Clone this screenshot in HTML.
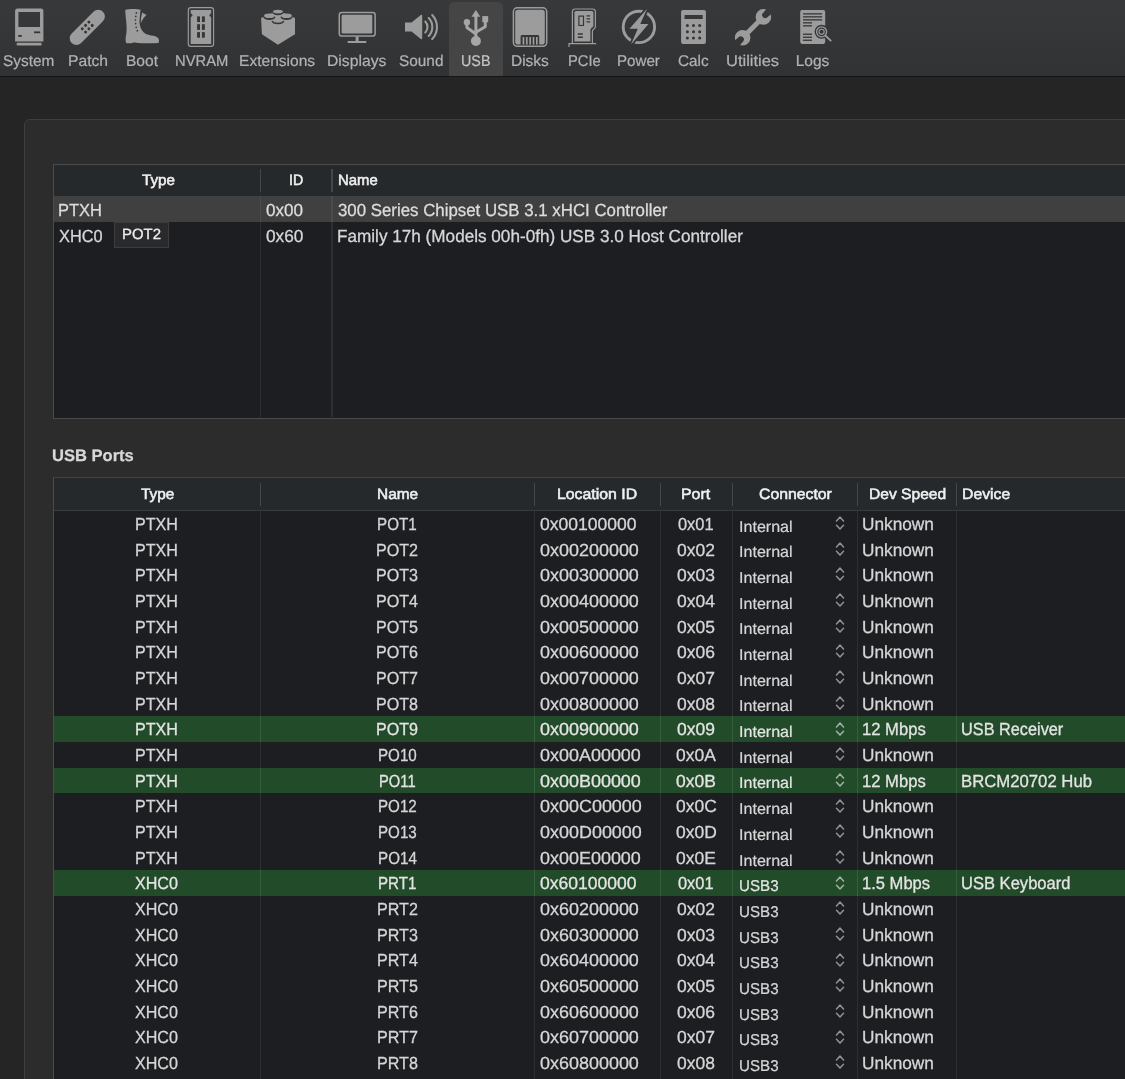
<!DOCTYPE html>
<html><head><meta charset="utf-8"><title>Hackintool - USB</title><style>
*{margin:0;padding:0;box-sizing:border-box}
html,body{width:1125px;height:1079px;overflow:hidden;background:#252525}
body{position:relative;text-rendering:geometricPrecision;font-family:"Liberation Sans",sans-serif;color:#d9d9d9;font-size:16px}
#root{position:absolute;left:0;top:0;width:1125px;height:1079px;overflow:hidden;will-change:opacity}
.abs{position:absolute}
#tb{position:absolute;left:0;top:0;width:1125px;height:76px;background:linear-gradient(#38393a,#313234)}
#tbline{position:absolute;left:0;top:76px;width:1125px;height:1.4px;background:#151515}
#sel{position:absolute;left:449px;top:1.5px;width:54px;height:74.5px;background:#454546;border-radius:5px 5px 0 0}
.lbl{position:absolute;top:51.6px;height:20px;line-height:20px;font-size:15.2px;letter-spacing:0.1px;color:#b2b2b2;text-align:center;white-space:nowrap;transform:translateX(-50%)}
.ico{position:absolute;left:0;top:0}
#box{position:absolute;left:24px;top:119px;width:1200px;height:1100px;background:#2c2c2c;border:1.2px solid #3e3e3e;border-radius:6px}
.tbl{position:absolute;left:53px;width:1100px;background:#1d1e22;border:1.2px solid #4a4b4d;border-right:none}
.hdr{position:absolute;left:0;width:1100px;background:#26292c}
.hl{position:absolute;width:1.2px;background:#45474a}
.vl{position:absolute;width:1.2px;background:#2e2f33}
.ht{position:absolute;font-size:14.6px;color:#f2f2f2;white-space:nowrap;-webkit-text-stroke:0.35px #f2f2f2;letter-spacing:0.35px}
.c{position:absolute;white-space:nowrap;color:#d6d6d6;font-size:16px}
.cc{transform:translateX(-50%)}
.t{position:absolute;white-space:nowrap;line-height:24px;will-change:opacity;transform-origin:0 0}
.g{position:absolute;left:54px;width:1100px;background:#224c29}
</style></head><body><div id="root">
<div id="tb"></div><div id="sel"></div><div id="tbline"></div>
<svg class="ico" width="1125" height="76" viewBox="0 0 1125 76"><g fill="#9c9c9c"><path fill-rule="evenodd" d="M17.6 8.6h23.3a2.5 2.5 0 0 1 2.5 2.5v30.4h-28.3v-30.4a2.5 2.5 0 0 1 2.5-2.5zM18.4 11.9v15h21.6v-15z"/><rect x="16.6" y="42.8" width="25" height="2.8" rx="1"/></g><rect x="34" y="31.4" width="6.2" height="1.8" fill="#353638"/><rect x="18.2" y="35" width="3.5" height="1.8" fill="#353638"/><g transform="translate(87.3 27.3) rotate(-45)"><rect x="-22.1" y="-6.7" width="44.2" height="13.4" rx="6.7" fill="#9c9c9c"/><circle cx="-4.55" cy="-2.6" r="1.45" fill="#353638"/><circle cx="-4.55" cy="2.1" r="1.45" fill="#353638"/><circle cx="0.15" cy="-2.6" r="1.45" fill="#353638"/><circle cx="0.15" cy="2.1" r="1.45" fill="#353638"/><circle cx="4.85" cy="-2.6" r="1.45" fill="#353638"/><circle cx="4.85" cy="2.1" r="1.45" fill="#353638"/></g><path fill="#9c9c9c" d="M125.2 10C128 8.7 137 8.600 140.600 9.600C140.200 13 139.700 18 139.600 21.500C139.600 26 141 29.800 143.800 32.400C146.500 34.800 150 35.200 153.500 35.800C157 36.400 159 38 159 40.500C159 41.600 158.800 42.400 158.400 43C150 43.600 141 43.300 136 42.800C134.500 42.400 133.500 42.400 132.500 43C130 43.400 128 43.300 126.200 43C125.300 40.500 125.500 38 126 35.500C127 31 126.600 26 126.200 21.800C125.800 17 125.300 13 125.200 10Z"/><path fill="#9c9c9c" d="M142.100 12.500L146.500 15C144 17 142.100 20 140.700 23.800C140.500 20 141 16 142.100 12.500Z"/><path d="M141.300 11.500C140.800 15.500 140.300 19.500 140.100 23.600" fill="none" stroke="#353638" stroke-width="0.700"/><circle cx="136.4" cy="12.9" r="0.85" fill="#353638"/><circle cx="135.8" cy="16.4" r="0.85" fill="#353638"/><circle cx="135.4" cy="20" r="0.85" fill="#353638"/><circle cx="135.6" cy="23.6" r="0.85" fill="#353638"/><circle cx="136.2" cy="27.3" r="0.85" fill="#353638"/><circle cx="137.3" cy="30.7" r="0.85" fill="#353638"/><rect x="188.3" y="7.6" width="25.300" height="38.700" rx="2.600" fill="none" stroke="#9c9c9c" stroke-width="1.150"/><path fill="#9c9c9c" d="M190.700 10h20.500v3l-2 2.300 2 2.300v26.500h-20.500v-26.500l2-2.300-2-2.300z"/><rect x="197.1" y="16.4" width="2.900" height="5.7" fill="#353638"/><rect x="197.1" y="24.2" width="2.900" height="5.7" fill="#353638"/><rect x="197.1" y="32.1" width="2.900" height="5.6" fill="#353638"/><rect x="201.95" y="16.4" width="2.900" height="5.7" fill="#353638"/><rect x="201.95" y="24.2" width="2.900" height="5.7" fill="#353638"/><rect x="201.95" y="32.1" width="2.900" height="5.6" fill="#353638"/><path fill="#9c9c9c" d="M261.100 18L277.900 10.500l17.100 7.500v16.200l-17.100 10.600-16-10.600z"/><ellipse cx="277.900" cy="12.600" rx="5" ry="2" fill="#9c9c9c"/><ellipse cx="277.9" cy="12.9" rx="5.4" ry="2.4" fill="#353638"/><ellipse cx="277.9" cy="11.6" rx="4.9" ry="1.9" fill="#9c9c9c"/><rect x="264.050" y="15.800" width="10.700" height="1.300" fill="#9c9c9c"/><rect x="281.150" y="15.800" width="10.700" height="1.300" fill="#9c9c9c"/><ellipse cx="269.4" cy="17.2" rx="5.8" ry="2.8" fill="#353638"/><ellipse cx="269.4" cy="15.8" rx="5.3" ry="2.3" fill="#9c9c9c"/><ellipse cx="286.5" cy="17.2" rx="5.8" ry="2.8" fill="#353638"/><ellipse cx="286.5" cy="15.8" rx="5.3" ry="2.3" fill="#9c9c9c"/><path d="M272.100 21.100a5.900 3 0 0 0 11.600 0" fill="none" stroke="#353638" stroke-width="1.400"/><rect x="339.250" y="12.450" width="35.900" height="23.600" rx="2.600" fill="none" stroke="#9c9c9c" stroke-width="1.500"/><rect x="341.600" y="14.800" width="30.700" height="18.700" rx="1.300" fill="#9c9c9c"/><rect x="355.600" y="36.500" width="3" height="4.800" fill="#9c9c9c"/><rect x="347.600" y="40.900" width="18.700" height="2.100" rx="0.500" fill="#9c9c9c"/><path fill="#9c9c9c" d="M405 22.500h6.500l9.300-7.600c.7-.5 1.400-.2 1.400.6v23c0 .8-.7 1.100-1.400.6l-9.300-7.600h-6.500z"/><g fill="none" stroke="#9c9c9c" stroke-width="2.100" stroke-linecap="round"><path d="M425.300 21.500a8 8 0 0 1 0 11"/><path d="M428.700 18a13 13 0 0 1 0 18"/><path d="M432.200 15a17.500 17.500 0 0 1 0 24"/></g><g fill="#a6a6a6" stroke="none"><circle cx="475.900" cy="41" r="5"/><path d="M475.900 10l4.400 6.700h-8.800z"/><circle cx="466.900" cy="22.300" r="3.200"/><rect x="482.300" y="16.100" width="5.900" height="6.100"/></g><g fill="none" stroke="#a6a6a6" stroke-width="3" stroke-linejoin="round"><path d="M475.900 16v22"/><path d="M466.900 23v4.600l9 6.300"/><path d="M485.250 21v5.800l-9.350 5.400"/></g><rect x="513.400" y="7.800" width="33.300" height="38.500" rx="3.800" fill="none" stroke="#9c9c9c" stroke-width="1.500"/><path fill="#9c9c9c" fill-rule="evenodd" d="M518 9.700h24a2.800 2.800 0 0 1 2.800 2.800v29.300a2.800 2.800 0 0 1-2.800 2.800h-2.800v-8a1.500 1.500 0 0 0-1.500-1.500h-15.600a1.500 1.500 0 0 0-1.500 1.500v8h-2.600a2.800 2.800 0 0 1-2.800-2.800v-29.300a2.800 2.800 0 0 1 2.800-2.800z"/><rect x="522.60" y="37" width="1.700" height="7.600" fill="#9c9c9c"/><rect x="525.95" y="37" width="1.700" height="7.600" fill="#9c9c9c"/><rect x="529.30" y="37" width="1.700" height="7.600" fill="#9c9c9c"/><rect x="532.65" y="37" width="1.700" height="7.600" fill="#9c9c9c"/><rect x="536.00" y="37" width="1.700" height="7.600" fill="#9c9c9c"/><g fill="none" stroke="#9c9c9c" stroke-width="1.2"><path d="M572.400 43.200v-31.500a2.700 2.700 0 0 1 2.700-2.700h17.600a2.700 2.700 0 0 1 2.700 2.700v14.500c0 1.500-.5 2.200-1.500 2.800-1 .6-1.500 1.300-1.500 2.800v11.400"/><path d="M569 47v-3.400h27.200"/></g><path fill="#9c9c9c" fill-rule="evenodd" d="M574.400 41.600v-29a1.600 1.600 0 0 1 1.600-1.600h15.800a1.600 1.600 0 0 1 1.600 1.600v12.600c0 1.300-.5 2-1.500 2.600-1 .6-1.500 1.500-1.500 2.800v11zM578.300 15.500v10.600h5.800v-10.600zM586.500 15.200v1.300h3.600v-1.300zM586.500 18.200v1.300h3.600v-1.300zM586.500 21.200v1.300h3.600v-1.300zM577.800 33.300v1.400h5v-1.400zM577.800 36.600v1.400h5v-1.400z"/><rect x="579.500" y="16.700" width="3.400" height="8.200" fill="#9c9c9c"/><circle cx="638.900" cy="26.900" r="15.700" fill="none" stroke="#9c9c9c" stroke-width="2.900"/><path fill="#9c9c9c" d="M647.100 8.700L629.500 28.700h8.300L631 44.600l17.500-20.700h-8.200z" stroke="#353638" stroke-width="3.600" paint-order="stroke" stroke-linejoin="miter"/><path fill="#9c9c9c" fill-rule="evenodd" d="M683 10.100h21a1.900 1.900 0 0 1 1.900 1.900v30a1.900 1.900 0 0 1-1.900 1.900h-21a1.900 1.900 0 0 1-1.900-1.900v-30a1.900 1.900 0 0 1 1.900-1.900zM684.500 14.900v4.200h18.200v-4.200z"/><circle cx="687.4" cy="25.4" r="1.5" fill="#353638"/><circle cx="687.4" cy="31.7" r="1.5" fill="#353638"/><circle cx="687.4" cy="38" r="1.5" fill="#353638"/><circle cx="693.5" cy="25.4" r="1.5" fill="#353638"/><circle cx="693.5" cy="31.7" r="1.5" fill="#353638"/><circle cx="693.5" cy="38" r="1.5" fill="#353638"/><circle cx="699.7" cy="25.4" r="1.5" fill="#353638"/><circle cx="699.7" cy="31.7" r="1.5" fill="#353638"/><circle cx="699.7" cy="38" r="1.5" fill="#353638"/><mask id="wm" maskUnits="userSpaceOnUse" x="-30" y="-30" width="60" height="60"><rect x="-30" y="-30" width="60" height="60" fill="#fff"/><path fill="#000" d="M-3.700 -25L-3.100 -17.300a3.100 3.100 0 0 0 6.200 0L3.700 -25zM-3.700 25L-3.100 17.300a3.100 3.100 0 0 1 6.200 0L3.700 25z"/></mask><g transform="translate(753 27.300) rotate(45)"><g mask="url(#wm)" fill="#9c9c9c"><circle cx="0" cy="-14.700" r="7.800"/><circle cx="0" cy="14.700" r="7.800"/><rect x="-2.450" y="-14" width="4.900" height="28"/></g></g><path fill="#9c9c9c" d="M802 10.100h21.400a1.800 1.800 0 0 1 1.800 1.800v30.200a1.800 1.800 0 0 1-1.800 1.800h-21.400a1.800 1.800 0 0 1-1.800-1.800v-30.200a1.800 1.800 0 0 1 1.800-1.800z"/><rect x="803" y="13.2" width="19.200" height="1.300" fill="#353638"/><rect x="803" y="16.2" width="19.200" height="1.300" fill="#353638"/><rect x="803" y="19.2" width="19.200" height="1.300" fill="#353638"/><rect x="803" y="22.2" width="9" height="1.300" fill="#353638"/><rect x="803" y="25.2" width="9" height="1.300" fill="#353638"/><rect x="803" y="33.6" width="9" height="1.300" fill="#353638"/><rect x="803" y="36.6" width="9" height="1.300" fill="#353638"/><rect x="803" y="39.6" width="9" height="1.300" fill="#353638"/><circle cx="821.600" cy="31.800" r="7" fill="#353638"/><path d="M824.800 35.500l6.100 5.500" stroke="#353638" stroke-width="4" /><circle cx="821.600" cy="31.800" r="5" fill="none" stroke="#9c9c9c" stroke-width="1.300"/><circle cx="821.600" cy="31.800" r="2.600" fill="none" stroke="#9c9c9c" stroke-width="1.100"/><path d="M825.300 35.500l5.400 5.100" stroke="#9c9c9c" stroke-width="1.800" stroke-linecap="round"/></svg>
<div class="t" style="left:3.23px;top:50px;font-size:15.5px;color:#b2b2b2;-webkit-text-stroke:0.22px #b2b2b2;transform:scaleX(0.9931);">System</div>
<div class="t" style="left:67.99px;top:50px;font-size:15.5px;color:#b2b2b2;-webkit-text-stroke:0.22px #b2b2b2;transform:scaleX(1.0106);">Patch</div>
<div class="t" style="left:125.85px;top:50px;font-size:15.5px;color:#b2b2b2;-webkit-text-stroke:0.22px #b2b2b2;transform:scaleX(1.0032);">Boot</div>
<div class="t" style="left:174.60px;top:50px;font-size:15.5px;color:#b2b2b2;-webkit-text-stroke:0.22px #b2b2b2;transform:scaleX(0.9524);">NVRAM</div>
<div class="t" style="left:239.25px;top:50px;font-size:15.5px;color:#b2b2b2;-webkit-text-stroke:0.22px #b2b2b2;transform:scaleX(1.0040);">Extensions</div>
<div class="t" style="left:326.84px;top:50px;font-size:15.5px;color:#b2b2b2;-webkit-text-stroke:0.22px #b2b2b2;transform:scaleX(1.0140);">Displays</div>
<div class="t" style="left:398.63px;top:50px;font-size:15.5px;color:#b2b2b2;-webkit-text-stroke:0.22px #b2b2b2;transform:scaleX(0.9914);">Sound</div>
<div class="t" style="left:460.93px;top:50px;font-size:15.5px;color:#c4c4c4;-webkit-text-stroke:0.22px #c4c4c4;transform:scaleX(0.9233);">USB</div>
<div class="t" style="left:511.05px;top:50px;font-size:15.5px;color:#b2b2b2;-webkit-text-stroke:0.22px #b2b2b2;transform:scaleX(0.9989);">Disks</div>
<div class="t" style="left:567.70px;top:50px;font-size:15.5px;color:#b2b2b2;-webkit-text-stroke:0.22px #b2b2b2;transform:scaleX(0.9499);">PCIe</div>
<div class="t" style="left:616.98px;top:50px;font-size:15.5px;color:#b2b2b2;-webkit-text-stroke:0.22px #b2b2b2;transform:scaleX(0.9744);">Power</div>
<div class="t" style="left:678.01px;top:50px;font-size:15.5px;color:#b2b2b2;-webkit-text-stroke:0.22px #b2b2b2;transform:scaleX(0.9859);">Calc</div>
<div class="t" style="left:725.89px;top:50px;font-size:15.5px;color:#b2b2b2;-webkit-text-stroke:0.22px #b2b2b2;transform:scaleX(1.0628);">Utilities</div>
<div class="t" style="left:795.75px;top:50px;font-size:15.5px;color:#b2b2b2;-webkit-text-stroke:0.22px #b2b2b2;transform:scaleX(1.0000);">Logs</div>
<div id="box"></div>
<div class="tbl" style="top:164px;height:254.600px"></div>
<div class="hdr" style="left:54.200px;top:165.200px;height:31.200px"></div>
<div class="abs" style="left:54.200px;top:196.200px;width:1100px;height:25.700px;background:#404040"></div>
<div class="vl" style="left:260px;top:196.300px;height:221px"></div>
<div class="vl" style="left:260px;top:196.200px;height:25.700px;background:#4c4c4c"></div>
<div class="hl" style="left:260px;top:169px;height:22.700px"></div>
<div class="vl" style="left:331.4px;top:196.300px;height:221px"></div>
<div class="vl" style="left:331.4px;top:196.200px;height:25.700px;background:#4c4c4c"></div>
<div class="hl" style="left:331.4px;top:169px;height:22.700px"></div>
<div class="t" style="left:141.55px;top:169px;font-size:15.0px;color:#f0f0f0;-webkit-text-stroke:0.55px #f0f0f0;transform:scaleX(1.0156);">Type</div>
<div class="t" style="left:289.00px;top:169px;font-size:15.0px;color:#f0f0f0;-webkit-text-stroke:0.55px #f0f0f0;transform:scaleX(0.9468);">ID</div>
<div class="t" style="left:338.16px;top:169px;font-size:15.0px;color:#f0f0f0;-webkit-text-stroke:0.55px #f0f0f0;transform:scaleX(0.9911);">Name</div>
<div class="t" style="left:58.20px;top:198px;font-size:17.5px;color:#dcdcdc;-webkit-text-stroke:0.3px #dcdcdc;transform:scaleX(0.9422);">PTXH</div>
<div class="t" style="left:265.98px;top:198px;font-size:17.5px;color:#dcdcdc;-webkit-text-stroke:0.3px #dcdcdc;transform:scaleX(0.9754);">0x00</div>
<div class="t" style="left:337.59px;top:198px;font-size:17.5px;color:#dcdcdc;-webkit-text-stroke:0.3px #dcdcdc;transform:scaleX(0.9621);">300 Series Chipset USB 3.1 xHCI Controller</div>
<div class="t" style="left:58.86px;top:224px;font-size:17.5px;color:#d6d6d6;-webkit-text-stroke:0.3px #d6d6d6;transform:scaleX(0.9340);">XHC0</div>
<div class="t" style="left:265.97px;top:224px;font-size:17.5px;color:#d6d6d6;-webkit-text-stroke:0.3px #d6d6d6;transform:scaleX(0.9861);">0x60</div>
<div class="t" style="left:336.97px;top:224px;font-size:17.5px;color:#d6d6d6;-webkit-text-stroke:0.3px #d6d6d6;transform:scaleX(0.9796);">Family 17h (Models 00h-0fh) USB 3.0 Host Controller</div>
<div class="abs" style="left:113.600px;top:221.600px;width:55.800px;height:26.200px;background:#2a2a2c;border:1.2px solid #3d3d40"></div>
<div class="t" style="left:121.74px;top:223px;font-size:14.8px;color:#ececec;-webkit-text-stroke:0.3px #ececec;transform:scaleX(1.0074);">POT2</div>
<div class="t" style="left:52.07px;top:444px;font-size:16.6px;color:#d8d8d8;font-weight:bold;-webkit-text-stroke:0.25px #d8d8d8;transform:scaleX(0.9967);">USB Ports</div>
<div class="tbl" style="top:477px;height:700px;border-top:1.600px solid #404245"></div>
<div class="hdr" style="left:54.200px;top:478.400px;height:31.600px"></div>
<div class="abs" style="left:54.200px;top:509.800px;width:1100px;height:1.200px;background:#3a3c3f"></div>
<div class="vl" style="left:260px;top:511px;height:600px"></div>
<div class="hl" style="left:260px;top:483px;height:22.500px"></div>
<div class="vl" style="left:534.3px;top:511px;height:600px"></div>
<div class="hl" style="left:534.3px;top:483px;height:22.500px"></div>
<div class="vl" style="left:660.2px;top:511px;height:600px"></div>
<div class="hl" style="left:660.2px;top:483px;height:22.500px"></div>
<div class="vl" style="left:732.2px;top:511px;height:600px"></div>
<div class="hl" style="left:732.2px;top:483px;height:22.500px"></div>
<div class="vl" style="left:857.3px;top:511px;height:600px"></div>
<div class="hl" style="left:857.3px;top:483px;height:22.500px"></div>
<div class="vl" style="left:956.2px;top:511px;height:600px"></div>
<div class="hl" style="left:956.2px;top:483px;height:22.500px"></div>
<div class="t" style="left:141.45px;top:483px;font-size:15.0px;color:#f0f0f0;-webkit-text-stroke:0.55px #f0f0f0;transform:scaleX(1.0250);">Type</div>
<div class="t" style="left:377.22px;top:483px;font-size:15.0px;color:#f0f0f0;-webkit-text-stroke:0.55px #f0f0f0;transform:scaleX(1.0271);">Name</div>
<div class="t" style="left:557.29px;top:483px;font-size:15.0px;color:#f0f0f0;-webkit-text-stroke:0.55px #f0f0f0;transform:scaleX(1.0558);">Location ID</div>
<div class="t" style="left:681.29px;top:483px;font-size:15.0px;color:#f0f0f0;-webkit-text-stroke:0.55px #f0f0f0;transform:scaleX(1.0612);">Port</div>
<div class="t" style="left:758.73px;top:483px;font-size:15.0px;color:#f0f0f0;-webkit-text-stroke:0.55px #f0f0f0;transform:scaleX(1.0520);">Connector</div>
<div class="t" style="left:868.71px;top:483px;font-size:15.0px;color:#f0f0f0;-webkit-text-stroke:0.55px #f0f0f0;transform:scaleX(1.0397);">Dev Speed</div>
<div class="t" style="left:962.10px;top:483px;font-size:15.0px;color:#f0f0f0;-webkit-text-stroke:0.55px #f0f0f0;transform:scaleX(1.0516);">Device</div>
<div class="t" style="left:135.23px;top:512px;font-size:17.5px;color:#d6d6d6;-webkit-text-stroke:0.3px #d6d6d6;transform:scaleX(0.9198);">PTXH</div>
<div class="t" style="left:377.43px;top:512px;font-size:17.5px;color:#d6d6d6;-webkit-text-stroke:0.3px #d6d6d6;transform:scaleX(0.8683);">POT1</div>
<div class="t" style="left:540.07px;top:512px;font-size:17.5px;color:#d6d6d6;-webkit-text-stroke:0.3px #d6d6d6;transform:scaleX(1.0019);">0x00100000</div>
<div class="t" style="left:678.38px;top:512px;font-size:17.5px;color:#d6d6d6;-webkit-text-stroke:0.3px #d6d6d6;transform:scaleX(0.9366);">0x01</div>
<div class="t" style="left:739.10px;top:516px;font-size:15.7px;color:#d6d6d6;-webkit-text-stroke:0.2px #d6d6d6;transform:scaleX(1.0251);">Internal</div>
<svg class="abs" style="left:835.2px;top:516.13px" width="10" height="14.200" viewBox="0 0 10 14.200"><path d="M1.500 5L5 1.100l3.500 3.900M1.500 9.200L5 13.100l3.500-3.900" fill="none" stroke="#949496" stroke-width="1.450" stroke-linecap="round" stroke-linejoin="round"/></svg>
<div class="t" style="left:862.37px;top:512px;font-size:17.5px;color:#d6d6d6;-webkit-text-stroke:0.3px #d6d6d6;transform:scaleX(0.9845);">Unknown</div>
<div class="t" style="left:135.23px;top:538px;font-size:17.5px;color:#d6d6d6;-webkit-text-stroke:0.3px #d6d6d6;transform:scaleX(0.9198);">PTXH</div>
<div class="t" style="left:376.22px;top:538px;font-size:17.5px;color:#d6d6d6;-webkit-text-stroke:0.3px #d6d6d6;transform:scaleX(0.9206);">POT2</div>
<div class="t" style="left:540.06px;top:538px;font-size:17.5px;color:#d6d6d6;-webkit-text-stroke:0.3px #d6d6d6;transform:scaleX(1.0260);">0x00200000</div>
<div class="t" style="left:677.23px;top:538px;font-size:17.5px;color:#d6d6d6;-webkit-text-stroke:0.3px #d6d6d6;transform:scaleX(0.9983);">0x02</div>
<div class="t" style="left:739.10px;top:541px;font-size:15.7px;color:#d6d6d6;-webkit-text-stroke:0.2px #d6d6d6;transform:scaleX(1.0251);">Internal</div>
<svg class="abs" style="left:835.2px;top:541.80px" width="10" height="14.200" viewBox="0 0 10 14.200"><path d="M1.500 5L5 1.100l3.500 3.900M1.500 9.200L5 13.100l3.500-3.900" fill="none" stroke="#949496" stroke-width="1.450" stroke-linecap="round" stroke-linejoin="round"/></svg>
<div class="t" style="left:862.37px;top:538px;font-size:17.5px;color:#d6d6d6;-webkit-text-stroke:0.3px #d6d6d6;transform:scaleX(0.9845);">Unknown</div>
<div class="t" style="left:135.23px;top:563px;font-size:17.5px;color:#d6d6d6;-webkit-text-stroke:0.3px #d6d6d6;transform:scaleX(0.9198);">PTXH</div>
<div class="t" style="left:376.22px;top:563px;font-size:17.5px;color:#d6d6d6;-webkit-text-stroke:0.3px #d6d6d6;transform:scaleX(0.9206);">POT3</div>
<div class="t" style="left:540.06px;top:563px;font-size:17.5px;color:#d6d6d6;-webkit-text-stroke:0.3px #d6d6d6;transform:scaleX(1.0260);">0x00300000</div>
<div class="t" style="left:677.19px;top:563px;font-size:17.5px;color:#d6d6d6;-webkit-text-stroke:0.3px #d6d6d6;transform:scaleX(0.9983);">0x03</div>
<div class="t" style="left:739.10px;top:567px;font-size:15.7px;color:#d6d6d6;-webkit-text-stroke:0.2px #d6d6d6;transform:scaleX(1.0251);">Internal</div>
<svg class="abs" style="left:835.2px;top:567.48px" width="10" height="14.200" viewBox="0 0 10 14.200"><path d="M1.500 5L5 1.100l3.500 3.900M1.500 9.200L5 13.100l3.500-3.900" fill="none" stroke="#949496" stroke-width="1.450" stroke-linecap="round" stroke-linejoin="round"/></svg>
<div class="t" style="left:862.37px;top:563px;font-size:17.5px;color:#d6d6d6;-webkit-text-stroke:0.3px #d6d6d6;transform:scaleX(0.9845);">Unknown</div>
<div class="t" style="left:135.23px;top:589px;font-size:17.5px;color:#d6d6d6;-webkit-text-stroke:0.3px #d6d6d6;transform:scaleX(0.9198);">PTXH</div>
<div class="t" style="left:375.91px;top:589px;font-size:17.5px;color:#d6d6d6;-webkit-text-stroke:0.3px #d6d6d6;transform:scaleX(0.9206);">POT4</div>
<div class="t" style="left:540.06px;top:589px;font-size:17.5px;color:#d6d6d6;-webkit-text-stroke:0.3px #d6d6d6;transform:scaleX(1.0260);">0x00400000</div>
<div class="t" style="left:677.04px;top:589px;font-size:17.5px;color:#d6d6d6;-webkit-text-stroke:0.3px #d6d6d6;transform:scaleX(0.9983);">0x04</div>
<div class="t" style="left:739.10px;top:593px;font-size:15.7px;color:#d6d6d6;-webkit-text-stroke:0.2px #d6d6d6;transform:scaleX(1.0251);">Internal</div>
<svg class="abs" style="left:835.2px;top:593.14px" width="10" height="14.200" viewBox="0 0 10 14.200"><path d="M1.500 5L5 1.100l3.500 3.900M1.500 9.200L5 13.100l3.500-3.900" fill="none" stroke="#949496" stroke-width="1.450" stroke-linecap="round" stroke-linejoin="round"/></svg>
<div class="t" style="left:862.37px;top:589px;font-size:17.5px;color:#d6d6d6;-webkit-text-stroke:0.3px #d6d6d6;transform:scaleX(0.9845);">Unknown</div>
<div class="t" style="left:135.23px;top:615px;font-size:17.5px;color:#d6d6d6;-webkit-text-stroke:0.3px #d6d6d6;transform:scaleX(0.9198);">PTXH</div>
<div class="t" style="left:376.22px;top:615px;font-size:17.5px;color:#d6d6d6;-webkit-text-stroke:0.3px #d6d6d6;transform:scaleX(0.9206);">POT5</div>
<div class="t" style="left:540.06px;top:615px;font-size:17.5px;color:#d6d6d6;-webkit-text-stroke:0.3px #d6d6d6;transform:scaleX(1.0260);">0x00500000</div>
<div class="t" style="left:677.18px;top:615px;font-size:17.5px;color:#d6d6d6;-webkit-text-stroke:0.3px #d6d6d6;transform:scaleX(0.9983);">0x05</div>
<div class="t" style="left:739.10px;top:618px;font-size:15.7px;color:#d6d6d6;-webkit-text-stroke:0.2px #d6d6d6;transform:scaleX(1.0251);">Internal</div>
<svg class="abs" style="left:835.2px;top:618.81px" width="10" height="14.200" viewBox="0 0 10 14.200"><path d="M1.500 5L5 1.100l3.500 3.900M1.500 9.200L5 13.100l3.500-3.900" fill="none" stroke="#949496" stroke-width="1.450" stroke-linecap="round" stroke-linejoin="round"/></svg>
<div class="t" style="left:862.37px;top:615px;font-size:17.5px;color:#d6d6d6;-webkit-text-stroke:0.3px #d6d6d6;transform:scaleX(0.9845);">Unknown</div>
<div class="t" style="left:135.23px;top:640px;font-size:17.5px;color:#d6d6d6;-webkit-text-stroke:0.3px #d6d6d6;transform:scaleX(0.9198);">PTXH</div>
<div class="t" style="left:376.22px;top:640px;font-size:17.5px;color:#d6d6d6;-webkit-text-stroke:0.3px #d6d6d6;transform:scaleX(0.9206);">POT6</div>
<div class="t" style="left:540.06px;top:640px;font-size:17.5px;color:#d6d6d6;-webkit-text-stroke:0.3px #d6d6d6;transform:scaleX(1.0260);">0x00600000</div>
<div class="t" style="left:677.21px;top:640px;font-size:17.5px;color:#d6d6d6;-webkit-text-stroke:0.3px #d6d6d6;transform:scaleX(0.9983);">0x06</div>
<div class="t" style="left:739.10px;top:644px;font-size:15.7px;color:#d6d6d6;-webkit-text-stroke:0.2px #d6d6d6;transform:scaleX(1.0251);">Internal</div>
<svg class="abs" style="left:835.2px;top:644.49px" width="10" height="14.200" viewBox="0 0 10 14.200"><path d="M1.500 5L5 1.100l3.500 3.900M1.500 9.200L5 13.100l3.500-3.900" fill="none" stroke="#949496" stroke-width="1.450" stroke-linecap="round" stroke-linejoin="round"/></svg>
<div class="t" style="left:862.37px;top:640px;font-size:17.5px;color:#d6d6d6;-webkit-text-stroke:0.3px #d6d6d6;transform:scaleX(0.9845);">Unknown</div>
<div class="t" style="left:135.23px;top:666px;font-size:17.5px;color:#d6d6d6;-webkit-text-stroke:0.3px #d6d6d6;transform:scaleX(0.9198);">PTXH</div>
<div class="t" style="left:376.22px;top:666px;font-size:17.5px;color:#d6d6d6;-webkit-text-stroke:0.3px #d6d6d6;transform:scaleX(0.9206);">POT7</div>
<div class="t" style="left:540.06px;top:666px;font-size:17.5px;color:#d6d6d6;-webkit-text-stroke:0.3px #d6d6d6;transform:scaleX(1.0260);">0x00700000</div>
<div class="t" style="left:677.23px;top:666px;font-size:17.5px;color:#d6d6d6;-webkit-text-stroke:0.3px #d6d6d6;transform:scaleX(0.9983);">0x07</div>
<div class="t" style="left:739.10px;top:670px;font-size:15.7px;color:#d6d6d6;-webkit-text-stroke:0.2px #d6d6d6;transform:scaleX(1.0251);">Internal</div>
<svg class="abs" style="left:835.2px;top:670.15px" width="10" height="14.200" viewBox="0 0 10 14.200"><path d="M1.500 5L5 1.100l3.500 3.900M1.500 9.200L5 13.100l3.500-3.900" fill="none" stroke="#949496" stroke-width="1.450" stroke-linecap="round" stroke-linejoin="round"/></svg>
<div class="t" style="left:862.37px;top:666px;font-size:17.5px;color:#d6d6d6;-webkit-text-stroke:0.3px #d6d6d6;transform:scaleX(0.9845);">Unknown</div>
<div class="t" style="left:135.23px;top:692px;font-size:17.5px;color:#d6d6d6;-webkit-text-stroke:0.3px #d6d6d6;transform:scaleX(0.9198);">PTXH</div>
<div class="t" style="left:376.22px;top:692px;font-size:17.5px;color:#d6d6d6;-webkit-text-stroke:0.3px #d6d6d6;transform:scaleX(0.9206);">POT8</div>
<div class="t" style="left:540.06px;top:692px;font-size:17.5px;color:#d6d6d6;-webkit-text-stroke:0.3px #d6d6d6;transform:scaleX(1.0260);">0x00800000</div>
<div class="t" style="left:677.18px;top:692px;font-size:17.5px;color:#d6d6d6;-webkit-text-stroke:0.3px #d6d6d6;transform:scaleX(0.9983);">0x08</div>
<div class="t" style="left:739.10px;top:695px;font-size:15.7px;color:#d6d6d6;-webkit-text-stroke:0.2px #d6d6d6;transform:scaleX(1.0251);">Internal</div>
<svg class="abs" style="left:835.2px;top:695.82px" width="10" height="14.200" viewBox="0 0 10 14.200"><path d="M1.500 5L5 1.100l3.500 3.900M1.500 9.200L5 13.100l3.500-3.900" fill="none" stroke="#949496" stroke-width="1.450" stroke-linecap="round" stroke-linejoin="round"/></svg>
<div class="t" style="left:862.37px;top:692px;font-size:17.5px;color:#d6d6d6;-webkit-text-stroke:0.3px #d6d6d6;transform:scaleX(0.9845);">Unknown</div>
<div class="g" style="top:716.46px;height:25.57px"></div>
<div class="abs" style="left:260px;top:716.46px;width:1.200px;height:25.57px;background:#34603b"></div>
<div class="abs" style="left:534.3px;top:716.46px;width:1.200px;height:25.57px;background:#34603b"></div>
<div class="abs" style="left:660.2px;top:716.46px;width:1.200px;height:25.57px;background:#34603b"></div>
<div class="abs" style="left:732.2px;top:716.46px;width:1.200px;height:25.57px;background:#34603b"></div>
<div class="abs" style="left:857.3px;top:716.46px;width:1.200px;height:25.57px;background:#34603b"></div>
<div class="abs" style="left:956.2px;top:716.46px;width:1.200px;height:25.57px;background:#34603b"></div>
<div class="t" style="left:135.23px;top:717px;font-size:17.5px;color:#e4e4e4;-webkit-text-stroke:0.3px #e4e4e4;transform:scaleX(0.9198);">PTXH</div>
<div class="t" style="left:376.22px;top:717px;font-size:17.5px;color:#e4e4e4;-webkit-text-stroke:0.3px #e4e4e4;transform:scaleX(0.9206);">POT9</div>
<div class="t" style="left:540.06px;top:717px;font-size:17.5px;color:#e4e4e4;-webkit-text-stroke:0.3px #e4e4e4;transform:scaleX(1.0260);">0x00900000</div>
<div class="t" style="left:677.22px;top:717px;font-size:17.5px;color:#e4e4e4;-webkit-text-stroke:0.3px #e4e4e4;transform:scaleX(0.9983);">0x09</div>
<div class="t" style="left:739.10px;top:721px;font-size:15.7px;color:#e4e4e4;-webkit-text-stroke:0.2px #e4e4e4;transform:scaleX(1.0251);">Internal</div>
<svg class="abs" style="left:835.2px;top:721.50px" width="10" height="14.200" viewBox="0 0 10 14.200"><path d="M1.500 5L5 1.100l3.500 3.900M1.500 9.200L5 13.100l3.500-3.900" fill="none" stroke="#a3b5a6" stroke-width="1.450" stroke-linecap="round" stroke-linejoin="round"/></svg>
<div class="t" style="left:862.40px;top:717px;font-size:17.5px;color:#e4e4e4;-webkit-text-stroke:0.3px #e4e4e4;transform:scaleX(0.9488);">12 Mbps</div>
<div class="t" style="left:961.12px;top:717px;font-size:17.5px;color:#e4e4e4;-webkit-text-stroke:0.3px #e4e4e4;transform:scaleX(0.9308);">USB Receiver</div>
<div class="t" style="left:135.23px;top:743px;font-size:17.5px;color:#d6d6d6;-webkit-text-stroke:0.3px #d6d6d6;transform:scaleX(0.9198);">PTXH</div>
<div class="t" style="left:377.78px;top:743px;font-size:17.5px;color:#d6d6d6;-webkit-text-stroke:0.3px #d6d6d6;transform:scaleX(0.8674);">PO10</div>
<div class="t" style="left:540.06px;top:743px;font-size:17.5px;color:#d6d6d6;-webkit-text-stroke:0.3px #d6d6d6;transform:scaleX(1.0260);">0x00A00000</div>
<div class="t" style="left:676.00px;top:743px;font-size:17.5px;color:#d6d6d6;-webkit-text-stroke:0.3px #d6d6d6;transform:scaleX(0.9983);">0x0A</div>
<div class="t" style="left:739.10px;top:747px;font-size:15.7px;color:#d6d6d6;-webkit-text-stroke:0.2px #d6d6d6;transform:scaleX(1.0251);">Internal</div>
<svg class="abs" style="left:835.2px;top:747.17px" width="10" height="14.200" viewBox="0 0 10 14.200"><path d="M1.500 5L5 1.100l3.500 3.900M1.500 9.200L5 13.100l3.500-3.900" fill="none" stroke="#949496" stroke-width="1.450" stroke-linecap="round" stroke-linejoin="round"/></svg>
<div class="t" style="left:862.37px;top:743px;font-size:17.5px;color:#d6d6d6;-webkit-text-stroke:0.3px #d6d6d6;transform:scaleX(0.9845);">Unknown</div>
<div class="g" style="top:767.80px;height:25.57px"></div>
<div class="abs" style="left:260px;top:767.80px;width:1.200px;height:25.57px;background:#34603b"></div>
<div class="abs" style="left:534.3px;top:767.80px;width:1.200px;height:25.57px;background:#34603b"></div>
<div class="abs" style="left:660.2px;top:767.80px;width:1.200px;height:25.57px;background:#34603b"></div>
<div class="abs" style="left:732.2px;top:767.80px;width:1.200px;height:25.57px;background:#34603b"></div>
<div class="abs" style="left:857.3px;top:767.80px;width:1.200px;height:25.57px;background:#34603b"></div>
<div class="abs" style="left:956.2px;top:767.80px;width:1.200px;height:25.57px;background:#34603b"></div>
<div class="t" style="left:135.23px;top:769px;font-size:17.5px;color:#e4e4e4;-webkit-text-stroke:0.3px #e4e4e4;transform:scaleX(0.9198);">PTXH</div>
<div class="t" style="left:378.87px;top:769px;font-size:17.5px;color:#e4e4e4;-webkit-text-stroke:0.3px #e4e4e4;transform:scaleX(0.8420);">PO11</div>
<div class="t" style="left:540.06px;top:769px;font-size:17.5px;color:#e4e4e4;-webkit-text-stroke:0.3px #e4e4e4;transform:scaleX(1.0260);">0x00B00000</div>
<div class="t" style="left:676.49px;top:769px;font-size:17.5px;color:#e4e4e4;-webkit-text-stroke:0.3px #e4e4e4;transform:scaleX(0.9983);">0x0B</div>
<div class="t" style="left:739.10px;top:772px;font-size:15.7px;color:#e4e4e4;-webkit-text-stroke:0.2px #e4e4e4;transform:scaleX(1.0251);">Internal</div>
<svg class="abs" style="left:835.2px;top:772.84px" width="10" height="14.200" viewBox="0 0 10 14.200"><path d="M1.500 5L5 1.100l3.500 3.900M1.500 9.200L5 13.100l3.500-3.900" fill="none" stroke="#a3b5a6" stroke-width="1.450" stroke-linecap="round" stroke-linejoin="round"/></svg>
<div class="t" style="left:862.40px;top:769px;font-size:17.5px;color:#e4e4e4;-webkit-text-stroke:0.3px #e4e4e4;transform:scaleX(0.9488);">12 Mbps</div>
<div class="t" style="left:961.09px;top:769px;font-size:17.5px;color:#e4e4e4;-webkit-text-stroke:0.3px #e4e4e4;transform:scaleX(0.9554);">BRCM20702 Hub</div>
<div class="t" style="left:135.23px;top:794px;font-size:17.5px;color:#d6d6d6;-webkit-text-stroke:0.3px #d6d6d6;transform:scaleX(0.9198);">PTXH</div>
<div class="t" style="left:377.89px;top:794px;font-size:17.5px;color:#d6d6d6;-webkit-text-stroke:0.3px #d6d6d6;transform:scaleX(0.8671);">PO12</div>
<div class="t" style="left:540.06px;top:794px;font-size:17.5px;color:#d6d6d6;-webkit-text-stroke:0.3px #d6d6d6;transform:scaleX(1.0260);">0x00C00000</div>
<div class="t" style="left:675.88px;top:794px;font-size:17.5px;color:#d6d6d6;-webkit-text-stroke:0.3px #d6d6d6;transform:scaleX(0.9983);">0x0C</div>
<div class="t" style="left:739.10px;top:798px;font-size:15.7px;color:#d6d6d6;-webkit-text-stroke:0.2px #d6d6d6;transform:scaleX(1.0251);">Internal</div>
<svg class="abs" style="left:835.2px;top:798.50px" width="10" height="14.200" viewBox="0 0 10 14.200"><path d="M1.500 5L5 1.100l3.500 3.900M1.500 9.200L5 13.100l3.500-3.900" fill="none" stroke="#949496" stroke-width="1.450" stroke-linecap="round" stroke-linejoin="round"/></svg>
<div class="t" style="left:862.37px;top:794px;font-size:17.5px;color:#d6d6d6;-webkit-text-stroke:0.3px #d6d6d6;transform:scaleX(0.9845);">Unknown</div>
<div class="t" style="left:135.23px;top:820px;font-size:17.5px;color:#d6d6d6;-webkit-text-stroke:0.3px #d6d6d6;transform:scaleX(0.9198);">PTXH</div>
<div class="t" style="left:377.89px;top:820px;font-size:17.5px;color:#d6d6d6;-webkit-text-stroke:0.3px #d6d6d6;transform:scaleX(0.8671);">PO13</div>
<div class="t" style="left:540.06px;top:820px;font-size:17.5px;color:#d6d6d6;-webkit-text-stroke:0.3px #d6d6d6;transform:scaleX(1.0260);">0x00D00000</div>
<div class="t" style="left:675.88px;top:820px;font-size:17.5px;color:#d6d6d6;-webkit-text-stroke:0.3px #d6d6d6;transform:scaleX(0.9983);">0x0D</div>
<div class="t" style="left:739.10px;top:824px;font-size:15.7px;color:#d6d6d6;-webkit-text-stroke:0.2px #d6d6d6;transform:scaleX(1.0251);">Internal</div>
<svg class="abs" style="left:835.2px;top:824.18px" width="10" height="14.200" viewBox="0 0 10 14.200"><path d="M1.500 5L5 1.100l3.500 3.900M1.500 9.200L5 13.100l3.500-3.900" fill="none" stroke="#949496" stroke-width="1.450" stroke-linecap="round" stroke-linejoin="round"/></svg>
<div class="t" style="left:862.37px;top:820px;font-size:17.5px;color:#d6d6d6;-webkit-text-stroke:0.3px #d6d6d6;transform:scaleX(0.9845);">Unknown</div>
<div class="t" style="left:135.23px;top:846px;font-size:17.5px;color:#d6d6d6;-webkit-text-stroke:0.3px #d6d6d6;transform:scaleX(0.9198);">PTXH</div>
<div class="t" style="left:377.57px;top:846px;font-size:17.5px;color:#d6d6d6;-webkit-text-stroke:0.3px #d6d6d6;transform:scaleX(0.8679);">PO14</div>
<div class="t" style="left:540.06px;top:846px;font-size:17.5px;color:#d6d6d6;-webkit-text-stroke:0.3px #d6d6d6;transform:scaleX(1.0260);">0x00E00000</div>
<div class="t" style="left:676.18px;top:846px;font-size:17.5px;color:#d6d6d6;-webkit-text-stroke:0.3px #d6d6d6;transform:scaleX(0.9983);">0x0E</div>
<div class="t" style="left:739.10px;top:850px;font-size:15.7px;color:#d6d6d6;-webkit-text-stroke:0.2px #d6d6d6;transform:scaleX(1.0251);">Internal</div>
<svg class="abs" style="left:835.2px;top:849.85px" width="10" height="14.200" viewBox="0 0 10 14.200"><path d="M1.500 5L5 1.100l3.500 3.900M1.500 9.200L5 13.100l3.500-3.900" fill="none" stroke="#949496" stroke-width="1.450" stroke-linecap="round" stroke-linejoin="round"/></svg>
<div class="t" style="left:862.37px;top:846px;font-size:17.5px;color:#d6d6d6;-webkit-text-stroke:0.3px #d6d6d6;transform:scaleX(0.9845);">Unknown</div>
<div class="g" style="top:870.48px;height:25.57px"></div>
<div class="abs" style="left:260px;top:870.48px;width:1.200px;height:25.57px;background:#34603b"></div>
<div class="abs" style="left:534.3px;top:870.48px;width:1.200px;height:25.57px;background:#34603b"></div>
<div class="abs" style="left:660.2px;top:870.48px;width:1.200px;height:25.57px;background:#34603b"></div>
<div class="abs" style="left:732.2px;top:870.48px;width:1.200px;height:25.57px;background:#34603b"></div>
<div class="abs" style="left:857.3px;top:870.48px;width:1.200px;height:25.57px;background:#34603b"></div>
<div class="abs" style="left:956.2px;top:870.48px;width:1.200px;height:25.57px;background:#34603b"></div>
<div class="t" style="left:135.29px;top:871px;font-size:17.5px;color:#e4e4e4;-webkit-text-stroke:0.3px #e4e4e4;transform:scaleX(0.9198);">XHC0</div>
<div class="t" style="left:377.89px;top:871px;font-size:17.5px;color:#e4e4e4;-webkit-text-stroke:0.3px #e4e4e4;transform:scaleX(0.8671);">PRT1</div>
<div class="t" style="left:540.07px;top:871px;font-size:17.5px;color:#e4e4e4;-webkit-text-stroke:0.3px #e4e4e4;transform:scaleX(1.0019);">0x60100000</div>
<div class="t" style="left:678.38px;top:871px;font-size:17.5px;color:#e4e4e4;-webkit-text-stroke:0.3px #e4e4e4;transform:scaleX(0.9366);">0x01</div>
<div class="t" style="left:739.28px;top:875px;font-size:15.7px;color:#e4e4e4;-webkit-text-stroke:0.2px #e4e4e4;transform:scaleX(0.9660);">USB3</div>
<svg class="abs" style="left:835.2px;top:875.51px" width="10" height="14.200" viewBox="0 0 10 14.200"><path d="M1.500 5L5 1.100l3.500 3.900M1.500 9.200L5 13.100l3.500-3.900" fill="none" stroke="#a3b5a6" stroke-width="1.450" stroke-linecap="round" stroke-linejoin="round"/></svg>
<div class="t" style="left:862.40px;top:871px;font-size:17.5px;color:#e4e4e4;-webkit-text-stroke:0.3px #e4e4e4;transform:scaleX(0.9454);">1.5 Mbps</div>
<div class="t" style="left:961.10px;top:871px;font-size:17.5px;color:#e4e4e4;-webkit-text-stroke:0.3px #e4e4e4;transform:scaleX(0.9456);">USB Keyboard</div>
<div class="t" style="left:135.29px;top:897px;font-size:17.5px;color:#d6d6d6;-webkit-text-stroke:0.3px #d6d6d6;transform:scaleX(0.9198);">XHC0</div>
<div class="t" style="left:376.69px;top:897px;font-size:17.5px;color:#d6d6d6;-webkit-text-stroke:0.3px #d6d6d6;transform:scaleX(0.9206);">PRT2</div>
<div class="t" style="left:540.06px;top:897px;font-size:17.5px;color:#d6d6d6;-webkit-text-stroke:0.3px #d6d6d6;transform:scaleX(1.0260);">0x60200000</div>
<div class="t" style="left:677.23px;top:897px;font-size:17.5px;color:#d6d6d6;-webkit-text-stroke:0.3px #d6d6d6;transform:scaleX(0.9983);">0x02</div>
<div class="t" style="left:739.28px;top:901px;font-size:15.7px;color:#d6d6d6;-webkit-text-stroke:0.2px #d6d6d6;transform:scaleX(0.9660);">USB3</div>
<svg class="abs" style="left:835.2px;top:901.19px" width="10" height="14.200" viewBox="0 0 10 14.200"><path d="M1.500 5L5 1.100l3.500 3.900M1.500 9.200L5 13.100l3.500-3.900" fill="none" stroke="#949496" stroke-width="1.450" stroke-linecap="round" stroke-linejoin="round"/></svg>
<div class="t" style="left:862.37px;top:897px;font-size:17.5px;color:#d6d6d6;-webkit-text-stroke:0.3px #d6d6d6;transform:scaleX(0.9845);">Unknown</div>
<div class="t" style="left:135.29px;top:923px;font-size:17.5px;color:#d6d6d6;-webkit-text-stroke:0.3px #d6d6d6;transform:scaleX(0.9198);">XHC0</div>
<div class="t" style="left:376.69px;top:923px;font-size:17.5px;color:#d6d6d6;-webkit-text-stroke:0.3px #d6d6d6;transform:scaleX(0.9206);">PRT3</div>
<div class="t" style="left:540.06px;top:923px;font-size:17.5px;color:#d6d6d6;-webkit-text-stroke:0.3px #d6d6d6;transform:scaleX(1.0260);">0x60300000</div>
<div class="t" style="left:677.19px;top:923px;font-size:17.5px;color:#d6d6d6;-webkit-text-stroke:0.3px #d6d6d6;transform:scaleX(0.9983);">0x03</div>
<div class="t" style="left:739.28px;top:927px;font-size:15.7px;color:#d6d6d6;-webkit-text-stroke:0.2px #d6d6d6;transform:scaleX(0.9660);">USB3</div>
<svg class="abs" style="left:835.2px;top:926.86px" width="10" height="14.200" viewBox="0 0 10 14.200"><path d="M1.500 5L5 1.100l3.500 3.900M1.500 9.200L5 13.100l3.500-3.900" fill="none" stroke="#949496" stroke-width="1.450" stroke-linecap="round" stroke-linejoin="round"/></svg>
<div class="t" style="left:862.37px;top:923px;font-size:17.5px;color:#d6d6d6;-webkit-text-stroke:0.3px #d6d6d6;transform:scaleX(0.9845);">Unknown</div>
<div class="t" style="left:135.29px;top:948px;font-size:17.5px;color:#d6d6d6;-webkit-text-stroke:0.3px #d6d6d6;transform:scaleX(0.9198);">XHC0</div>
<div class="t" style="left:376.59px;top:948px;font-size:17.5px;color:#d6d6d6;-webkit-text-stroke:0.3px #d6d6d6;transform:scaleX(0.9206);">PRT4</div>
<div class="t" style="left:540.06px;top:948px;font-size:17.5px;color:#d6d6d6;-webkit-text-stroke:0.3px #d6d6d6;transform:scaleX(1.0260);">0x60400000</div>
<div class="t" style="left:677.04px;top:948px;font-size:17.5px;color:#d6d6d6;-webkit-text-stroke:0.3px #d6d6d6;transform:scaleX(0.9983);">0x04</div>
<div class="t" style="left:739.28px;top:952px;font-size:15.7px;color:#d6d6d6;-webkit-text-stroke:0.2px #d6d6d6;transform:scaleX(0.9660);">USB3</div>
<svg class="abs" style="left:835.2px;top:952.52px" width="10" height="14.200" viewBox="0 0 10 14.200"><path d="M1.500 5L5 1.100l3.500 3.900M1.500 9.200L5 13.100l3.500-3.900" fill="none" stroke="#949496" stroke-width="1.450" stroke-linecap="round" stroke-linejoin="round"/></svg>
<div class="t" style="left:862.37px;top:948px;font-size:17.5px;color:#d6d6d6;-webkit-text-stroke:0.3px #d6d6d6;transform:scaleX(0.9845);">Unknown</div>
<div class="t" style="left:135.29px;top:974px;font-size:17.5px;color:#d6d6d6;-webkit-text-stroke:0.3px #d6d6d6;transform:scaleX(0.9198);">XHC0</div>
<div class="t" style="left:376.69px;top:974px;font-size:17.5px;color:#d6d6d6;-webkit-text-stroke:0.3px #d6d6d6;transform:scaleX(0.9206);">PRT5</div>
<div class="t" style="left:540.06px;top:974px;font-size:17.5px;color:#d6d6d6;-webkit-text-stroke:0.3px #d6d6d6;transform:scaleX(1.0260);">0x60500000</div>
<div class="t" style="left:677.18px;top:974px;font-size:17.5px;color:#d6d6d6;-webkit-text-stroke:0.3px #d6d6d6;transform:scaleX(0.9983);">0x05</div>
<div class="t" style="left:739.28px;top:978px;font-size:15.7px;color:#d6d6d6;-webkit-text-stroke:0.2px #d6d6d6;transform:scaleX(0.9660);">USB3</div>
<svg class="abs" style="left:835.2px;top:978.20px" width="10" height="14.200" viewBox="0 0 10 14.200"><path d="M1.500 5L5 1.100l3.500 3.900M1.500 9.200L5 13.100l3.500-3.900" fill="none" stroke="#949496" stroke-width="1.450" stroke-linecap="round" stroke-linejoin="round"/></svg>
<div class="t" style="left:862.37px;top:974px;font-size:17.5px;color:#d6d6d6;-webkit-text-stroke:0.3px #d6d6d6;transform:scaleX(0.9845);">Unknown</div>
<div class="t" style="left:135.29px;top:1000px;font-size:17.5px;color:#d6d6d6;-webkit-text-stroke:0.3px #d6d6d6;transform:scaleX(0.9198);">XHC0</div>
<div class="t" style="left:376.69px;top:1000px;font-size:17.5px;color:#d6d6d6;-webkit-text-stroke:0.3px #d6d6d6;transform:scaleX(0.9206);">PRT6</div>
<div class="t" style="left:540.06px;top:1000px;font-size:17.5px;color:#d6d6d6;-webkit-text-stroke:0.3px #d6d6d6;transform:scaleX(1.0260);">0x60600000</div>
<div class="t" style="left:677.21px;top:1000px;font-size:17.5px;color:#d6d6d6;-webkit-text-stroke:0.3px #d6d6d6;transform:scaleX(0.9983);">0x06</div>
<div class="t" style="left:739.28px;top:1004px;font-size:15.7px;color:#d6d6d6;-webkit-text-stroke:0.2px #d6d6d6;transform:scaleX(0.9660);">USB3</div>
<svg class="abs" style="left:835.2px;top:1003.87px" width="10" height="14.200" viewBox="0 0 10 14.200"><path d="M1.500 5L5 1.100l3.500 3.900M1.500 9.200L5 13.100l3.500-3.900" fill="none" stroke="#949496" stroke-width="1.450" stroke-linecap="round" stroke-linejoin="round"/></svg>
<div class="t" style="left:862.37px;top:1000px;font-size:17.5px;color:#d6d6d6;-webkit-text-stroke:0.3px #d6d6d6;transform:scaleX(0.9845);">Unknown</div>
<div class="t" style="left:135.29px;top:1025px;font-size:17.5px;color:#d6d6d6;-webkit-text-stroke:0.3px #d6d6d6;transform:scaleX(0.9198);">XHC0</div>
<div class="t" style="left:376.69px;top:1025px;font-size:17.5px;color:#d6d6d6;-webkit-text-stroke:0.3px #d6d6d6;transform:scaleX(0.9206);">PRT7</div>
<div class="t" style="left:540.06px;top:1025px;font-size:17.5px;color:#d6d6d6;-webkit-text-stroke:0.3px #d6d6d6;transform:scaleX(1.0260);">0x60700000</div>
<div class="t" style="left:677.23px;top:1025px;font-size:17.5px;color:#d6d6d6;-webkit-text-stroke:0.3px #d6d6d6;transform:scaleX(0.9983);">0x07</div>
<div class="t" style="left:739.28px;top:1029px;font-size:15.7px;color:#d6d6d6;-webkit-text-stroke:0.2px #d6d6d6;transform:scaleX(0.9660);">USB3</div>
<svg class="abs" style="left:835.2px;top:1029.54px" width="10" height="14.200" viewBox="0 0 10 14.200"><path d="M1.500 5L5 1.100l3.500 3.900M1.500 9.200L5 13.100l3.500-3.900" fill="none" stroke="#949496" stroke-width="1.450" stroke-linecap="round" stroke-linejoin="round"/></svg>
<div class="t" style="left:862.37px;top:1025px;font-size:17.5px;color:#d6d6d6;-webkit-text-stroke:0.3px #d6d6d6;transform:scaleX(0.9845);">Unknown</div>
<div class="t" style="left:135.29px;top:1051px;font-size:17.5px;color:#d6d6d6;-webkit-text-stroke:0.3px #d6d6d6;transform:scaleX(0.9198);">XHC0</div>
<div class="t" style="left:376.69px;top:1051px;font-size:17.5px;color:#d6d6d6;-webkit-text-stroke:0.3px #d6d6d6;transform:scaleX(0.9206);">PRT8</div>
<div class="t" style="left:540.06px;top:1051px;font-size:17.5px;color:#d6d6d6;-webkit-text-stroke:0.3px #d6d6d6;transform:scaleX(1.0260);">0x60800000</div>
<div class="t" style="left:677.18px;top:1051px;font-size:17.5px;color:#d6d6d6;-webkit-text-stroke:0.3px #d6d6d6;transform:scaleX(0.9983);">0x08</div>
<div class="t" style="left:739.28px;top:1055px;font-size:15.7px;color:#d6d6d6;-webkit-text-stroke:0.2px #d6d6d6;transform:scaleX(0.9660);">USB3</div>
<svg class="abs" style="left:835.2px;top:1055.21px" width="10" height="14.200" viewBox="0 0 10 14.200"><path d="M1.500 5L5 1.100l3.500 3.900M1.500 9.200L5 13.100l3.500-3.900" fill="none" stroke="#949496" stroke-width="1.450" stroke-linecap="round" stroke-linejoin="round"/></svg>
<div class="t" style="left:862.37px;top:1051px;font-size:17.5px;color:#d6d6d6;-webkit-text-stroke:0.3px #d6d6d6;transform:scaleX(0.9845);">Unknown</div>
</div></body></html>
